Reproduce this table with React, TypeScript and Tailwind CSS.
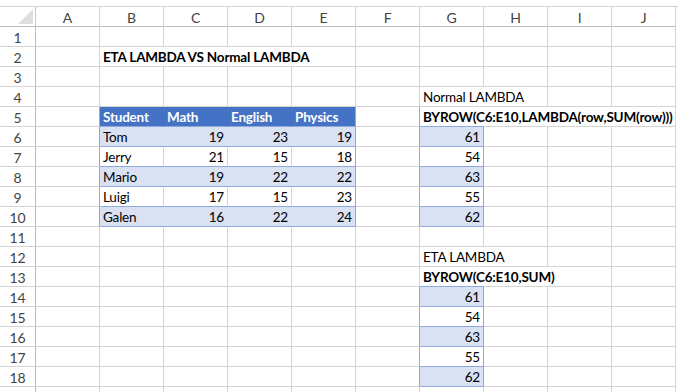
import React from "react";

const COLS = ["A", "B", "C", "D", "E", "F", "G", "H", "I", "J"];

const students: [string, number, number, number][] = [
  ["Tom", 19, 23, 19],
  ["Jerry", 21, 15, 18],
  ["Mario", 19, 22, 22],
  ["Luigi", 17, 15, 23],
  ["Galen", 16, 22, 24],
];
const totals = [61, 54, 63, 55, 62];

type CellSpec = {
  text?: string | number;
  cls: string; // border / bg classes
  txt?: string; // text classes
};

const GRID = "border-r border-b border-r-[#d4d4d4] border-b-[#d4d4d4]";

function plain(): CellSpec {
  return { cls: GRID };
}

function buildRow(r: number): CellSpec[] {
  const cells: CellSpec[] = COLS.map(() => plain());

  // title in B2, spills over C..E
  if (r === 2) {
    cells[1] = { text: "ETA LAMBDA VS Normal LAMBDA", cls: "border-b border-b-[#d4d4d4]", txt: "font-bold" };
    cells[2] = { cls: "border-b border-b-[#d4d4d4]" };
    cells[3] = { cls: "border-b border-b-[#d4d4d4]" };
  }

  // student table B5:E10
  if (r >= 5 && r <= 10) {
    cells[0] = { cls: "border-r border-b border-r-[#8ea9db] border-b-[#d4d4d4]" };
    cells[5] = { cls: "border-r border-b border-r-[#8ea9db] border-b-[#d4d4d4]" };
  }
  if (r === 5) {
    const heads = ["Student", "Math", "English", "Physics"];
    heads.forEach((h, i) => {
      cells[i + 1] = {
        text: h,
        cls:
          i === 3
            ? "bg-[#4472c4] border-r border-b border-r-[#8ea9db] border-b-[#8ea9db]"
            : "bg-[#4472c4] border-r border-b border-r-[#4472c4] border-b-[#8ea9db]",
        txt: "font-bold text-white",
      };
    });
  }
  if (r >= 6 && r <= 10) {
    const s = students[r - 6];
    const band = r % 2 === 0;
    s.forEach((v, i) => {
      let cls: string;
      if (i === 3) cls = band ? "bg-[#d9e1f2] border-r border-b border-r-[#8ea9db] border-b-[#8ea9db]" : "border-r border-b border-r-[#8ea9db] border-b-[#8ea9db]";
      else cls = band ? "bg-[#d9e1f2] border-r border-b border-r-[#d9e1f2] border-b-[#8ea9db]" : "border-r border-b border-r-[#d4d4d4] border-b-[#8ea9db]";
      cells[i + 1] = { text: v, cls, txt: i === 0 ? "" : "text-right" };
    });
  }

  // normal lambda block
  if (r === 4) {
    cells[6] = { text: "Normal LAMBDA", cls: "border-b border-b-[#d4d4d4]" };
  }
  if (r === 5) {
    cells[6] = { text: "BYROW(C6:E10,LAMBDA(row,SUM(row)))", cls: "border-b border-b-[#8ea9db]", txt: "font-bold" };
    cells[7] = { cls: "border-b border-b-[#d4d4d4]" };
    cells[8] = { cls: "border-b border-b-[#d4d4d4]" };
  }
  if (r >= 6 && r <= 10) {
    cells[6] = {
      text: totals[r - 6],
      cls: r % 2 === 0 ? "bg-[#d9e1f2] border-r border-b border-r-[#8ea9db] border-b-[#8ea9db]" : "border-r border-b border-r-[#8ea9db] border-b-[#8ea9db]",
      txt: "text-right",
    };
  }

  // eta lambda block
  if (r === 12) {
    cells[6] = { text: "ETA LAMBDA", cls: "border-b border-b-[#d4d4d4]" };
  }
  if (r === 13) {
    cells[6] = { text: "BYROW(C6:E10,SUM)", cls: "border-b border-b-[#8ea9db]", txt: "font-bold" };
    cells[7] = { cls: "border-b border-b-[#d4d4d4]" };
  }
  if (r >= 14 && r <= 18) {
    cells[5] = { cls: "border-r border-b border-r-[#8ea9db] border-b-[#d4d4d4]" };
    cells[6] = {
      text: totals[r - 14],
      cls: r % 2 === 0 ? "bg-[#d9e1f2] border-r border-b border-r-[#8ea9db] border-b-[#8ea9db]" : "border-r border-b border-r-[#8ea9db] border-b-[#8ea9db]",
      txt: "text-right",
    };
  }

  return cells;
}

const ROWS = Array.from({ length: 19 }, (_, i) => i + 1);

export default function App() {
  return (
    <div className="h-[392px] w-[678px] overflow-hidden bg-white font-['Lato','Liberation_Sans',sans-serif] text-[13.5px] tracking-[-0.2px] text-black">
      <div className="h-[7px] border-b border-[#d4d4d4]" />
      <div className="grid grid-cols-[36px_repeat(10,64px)] auto-rows-[20px]">
        {/* corner */}
        <div className="relative border-r border-b border-r-[#c6c6c6] border-b-[#bdbdbd]">
          <svg className="absolute bottom-[2px] right-[2px]" width="15" height="15" viewBox="0 0 15 15">
            <polygon points="15,0 15,15 0,15" fill="#dfdfdf" />
          </svg>
        </div>
        {COLS.map((c) => (
          <div
            key={c}
            className="flex items-center justify-center border-r border-b border-r-[#d4d4d4] border-b-[#bdbdbd] pt-[1px] text-[14px] text-[#444]"
          >
            {c}
          </div>
        ))}

        {ROWS.map((r) => (
          <React.Fragment key={r}>
            <div className="flex items-center justify-center border-r border-b border-r-[#bdbdbd] border-b-[#d4d4d4] pt-[1px] text-[14px] text-[#444]">
              {r < 19 ? r : ""}
            </div>
            {buildRow(r).map((cell, i) => (
              <div key={i} className={`relative ${cell.cls}`}>
                {cell.text !== undefined && (
                  <div
                    className={`absolute inset-y-0 left-0 flex items-center whitespace-nowrap px-[3px] pt-[3px] leading-none ${
                      cell.txt ?? ""
                    } ${cell.txt?.includes("text-right") ? "right-0 justify-end" : ""}`}
                  >
                    <span className="relative z-10">{cell.text}</span>
                  </div>
                )}
              </div>
            ))}
          </React.Fragment>
        ))}
      </div>
    </div>
  );
}
